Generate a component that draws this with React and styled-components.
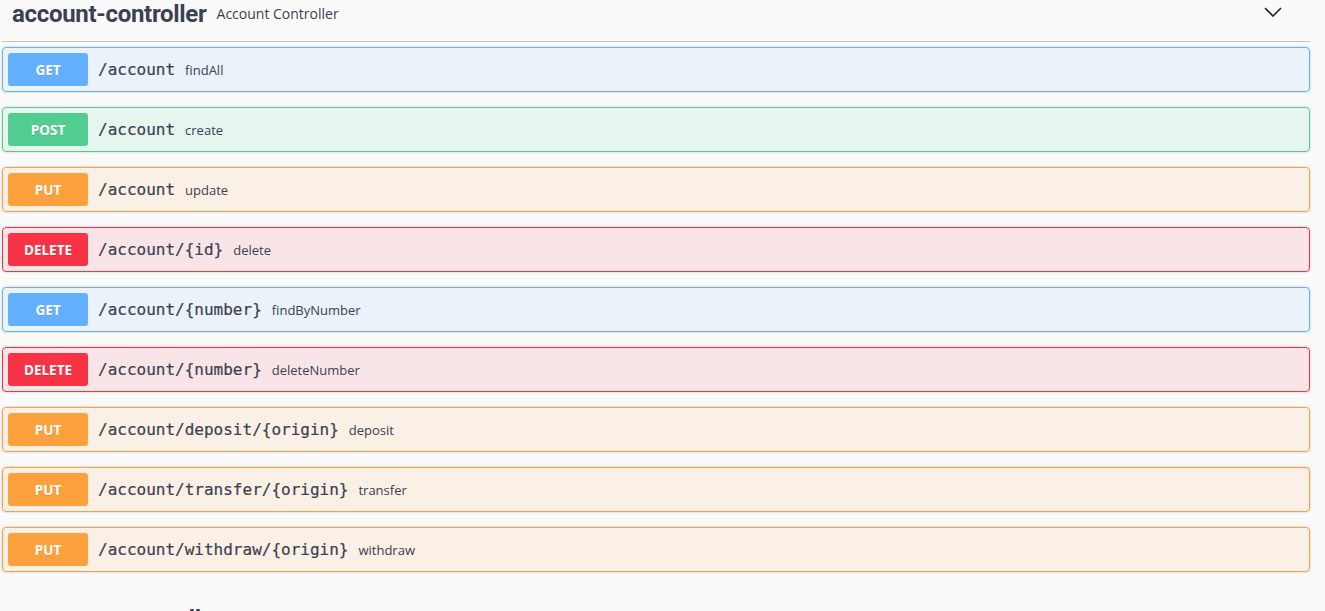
import React from "react";
import styled, { createGlobalStyle } from "styled-components";

const Global = createGlobalStyle`
  html, body { margin: 0; padding: 0; background: #fafafa; overflow: hidden; }
  * { box-sizing: border-box; }
`;

const METHODS = {
  GET: { c: "#63b0fe", bg: "rgba(97,175,254,.1)" },
  POST: { c: "#52cd91", bg: "rgba(73,204,144,.1)" },
  PUT: { c: "#fca13c", bg: "rgba(252,161,48,.1)" },
  DELETE: { c: "#f93346", bg: "rgba(249,51,70,.1)" },
};

const Page = styled.div`
  margin-top: -12px;
  padding: 0 15px 0 2px;
  background: #fafafa;
  color: #3b4151;
`;

const Section = styled.section`
  display: flex;
  flex-direction: column;
  & + & {
    margin-top: 6px;
  }
`;

const TagHeader = styled.div`
  display: flex;
  align-items: center;
  padding: 10px 20px 10px 10px;
  margin: 0 0 5px;
  border-bottom: 1px solid rgba(59, 65, 81, 0.3);
`;

const TagTitle = styled.span`
  font-family: Roboto, "Open Sans", sans-serif;
  font-weight: 700;
  font-size: 24px;
  line-height: 33px;
  letter-spacing: -0.3px;
  color: #3b4151;
`;

const TagDesc = styled.small`
  flex: 1;
  padding: 0 10px;
  font-family: "Open Sans", sans-serif;
  font-size: 14px;
  font-weight: 400;
  color: #3b4151;
  margin-top: -3px;
`;

const Toggle = styled.span`
  display: flex;
  width: 20px;
  height: 20px;
  margin-right: 7px;
  margin-top: -5px;
  align-items: center;
  justify-content: center;
`;

const Block = styled.div`
  display: flex;
  align-items: center;
  padding: 5px;
  margin: 0 0 15px;
  border: 1px solid ${(p) => METHODS[p.$m].c};
  background: ${(p) => METHODS[p.$m].bg};
  border-radius: 4px;
  box-shadow: 0 0 3px rgba(0, 0, 0, 0.19);
`;

const Badge = styled.span`
  min-width: 80px;
  height: 33px;
  display: flex;
  align-items: center;
  justify-content: center;
  padding: 0 15px;
  border-radius: 3px;
  background: ${(p) => METHODS[p.$m].c};
  color: #fff;
  font-family: "Open Sans", sans-serif;
  font-weight: 700;
  font-size: 13.5px;
  text-shadow: 0 1px 0 rgba(0, 0, 0, 0.1);
`;

const Path = styled.span`
  padding: 0 10px;
  font-family: "DejaVu Sans Mono", "Liberation Mono", monospace;
  font-size: 16px;
  font-weight: 500;
  color: #3b4151;
  -webkit-text-stroke: 0.2px #3b4151;
`;

const Summary = styled.span`
  font-family: "Open Sans", sans-serif;
  font-size: 13px;
  color: #3b4151;
`;

const Chevron = () => (
  <svg width="18" height="10" viewBox="0 0 18 10">
    <path d="M1 1 L9 9 L17 1" fill="none" stroke="#222" strokeWidth="1.6" />
  </svg>
);

const ops = [
  ["GET", "/account", "findAll"],
  ["POST", "/account", "create"],
  ["PUT", "/account", "update"],
  ["DELETE", "/account/{id}", "delete"],
  ["GET", "/account/{number}", "findByNumber"],
  ["DELETE", "/account/{number}", "deleteNumber"],
  ["PUT", "/account/deposit/{origin}", "deposit"],
  ["PUT", "/account/transfer/{origin}", "transfer"],
  ["PUT", "/account/withdraw/{origin}", "withdraw"],
];

export default function App() {
  return (
    <>
      <Global />
      <Page>
        <Section>
          <TagHeader>
            <TagTitle>account-controller</TagTitle>
            <TagDesc>Account Controller</TagDesc>
            <Toggle>
              <Chevron />
            </Toggle>
          </TagHeader>
          {ops.map(([m, p, s], i) => (
            <Block key={i} $m={m}>
              <Badge $m={m}>{m}</Badge>
              <Path>{p}</Path>
              <Summary>{s}</Summary>
            </Block>
          ))}
        </Section>
        <Section>
          <TagHeader>
            <TagTitle>customer-controller</TagTitle>
            <TagDesc>Customer Controller</TagDesc>
            <Toggle>
              <Chevron />
            </Toggle>
          </TagHeader>
        </Section>
      </Page>
    </>
  );
}
